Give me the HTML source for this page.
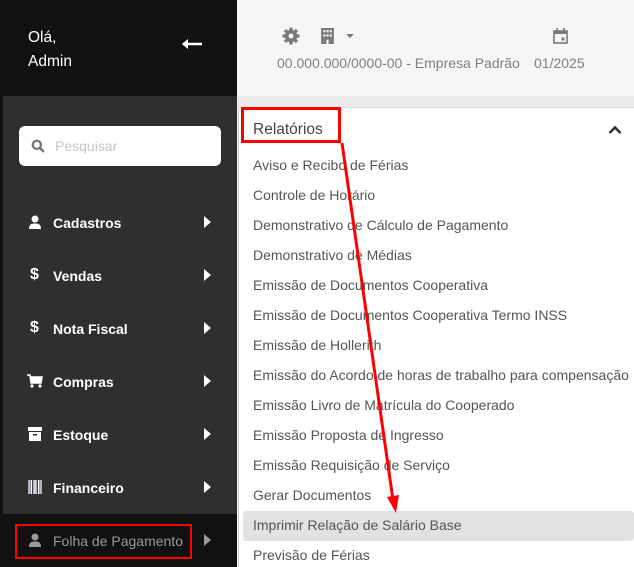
<!DOCTYPE html>
<html><head><meta charset="utf-8">
<style>
*{margin:0;padding:0;box-sizing:border-box}
body{width:634px;height:567px;overflow:hidden;font-family:"Liberation Sans",Roboto,sans-serif;background:#f5f5f5;position:relative}
.hdr{position:absolute;left:0;top:0;width:237px;height:96px;background:#111}
.hello{position:absolute;left:28px;top:26px;color:#fff;font-size:15.5px;line-height:24px}
.back{position:absolute;left:181px;top:38px}
.side{position:absolute;left:3px;top:96px;width:234px;height:418px;background:#2f2f2f}
.bot{position:absolute;left:0;top:514px;width:237px;height:53px;background:#111}
.strip{position:absolute;left:0;top:96px;width:3px;height:418px;background:#111}
.search{position:absolute;left:19px;top:126px;width:202px;height:40px;background:#fff;border-radius:6px}
.search span{position:absolute;left:36px;top:12px;color:#c4c4c4;font-size:14px}
.mi{position:absolute;left:28px;color:#fff;font-weight:bold;font-size:14px;height:20px;width:190px}
.mi .ic{position:absolute;left:0;top:2px;width:14px;height:14px}
.mi .t{position:absolute;left:25px;top:2px}
.mi .ar{position:absolute;left:176px;top:3px;width:0;height:0;border-left:7px solid #fff;border-top:6px solid transparent;border-bottom:6px solid transparent}
.top{position:absolute;left:237px;top:0;width:397px;height:96px;background:#f6f6f6}
.band{position:absolute;left:237px;top:96px;width:397px;height:11px;background:#ececec}
.toptxt{position:absolute;top:55px;color:#808080;font-size:14px}
.panel{position:absolute;left:238px;top:107px;width:396px;height:460px;background:#fff;border-left:1px solid #ccc;border-top:1px solid #ddd;border-radius:4px 0 0 0}
.rel{position:absolute;left:253px;top:121px;color:#444;font-size:15.5px}
.it{position:absolute;left:253px;color:#555;font-size:14px;white-space:nowrap}
.hl{position:absolute;left:243px;top:511px;width:391px;height:30px;background:#e2e2e2;border-radius:3px}
.rb{position:absolute;border:3px solid #f00}
.dl{position:absolute;left:2px;top:0;font-size:16px;font-weight:bold}
</style></head><body>
<div class="hdr"></div>
<div class="hello">Olá,<br>Admin</div>
<svg class="back" width="22" height="12" viewBox="0 0 22 12"><path d="M2 6H21" stroke="#fff" stroke-width="2.5"/><path d="M1 6L7 1V11Z" fill="#fff"/></svg>
<div class="strip"></div>
<div class="side"></div>
<div class="bot"></div>
<div class="search"><svg style="position:absolute;left:12px;top:13px" width="14" height="14" viewBox="0 0 12 12"><circle cx="5" cy="5" r="3.5" stroke="#777" stroke-width="2" fill="none"/><path d="M7.5 7.5L11 11" stroke="#777" stroke-width="2.2"/></svg><span>Pesquisar</span></div>

<div class="mi" style="top:213px"><svg class="ic" viewBox="0 0 14 14"><circle cx="7" cy="4" r="3.5" fill="#fff"/><path d="M1 14C1 9 4 8.5 7 8.5S13 9 13 14Z" fill="#fff"/></svg><span class="t">Cadastros</span><i class="ar"></i></div>
<div class="mi" style="top:266px"><span class="dl">$</span><span class="t">Vendas</span><i class="ar"></i></div>
<div class="mi" style="top:319px"><span class="dl">$</span><span class="t">Nota Fiscal</span><i class="ar"></i></div>
<div class="mi" style="top:372px"><svg class="ic" style="width:16px;left:-1px" viewBox="0 0 16 14"><path d="M0 1H3L4 9H14L15 3H4" fill="#fff" stroke="#fff" stroke-width="1.5"/><circle cx="5" cy="12" r="1.6" fill="#fff"/><circle cx="13" cy="12" r="1.6" fill="#fff"/></svg><span class="t">Compras</span><i class="ar"></i></div>
<div class="mi" style="top:425px"><svg class="ic" viewBox="0 0 14 14"><rect x="0" y="0" width="14" height="4" fill="#fff"/><rect x="1" y="5" width="12" height="9" fill="#fff"/><rect x="5" y="7" width="4" height="1.5" fill="#2f2f2f"/></svg><span class="t">Estoque</span><i class="ar"></i></div>
<div class="mi" style="top:478px"><svg class="ic" viewBox="0 0 14 14"><path d="M1 0V14M3.5 0V14M6 0V14M8 0V14M10.5 0V14M13 0V14" stroke="#fff" stroke-width="1.2"/><path d="M2.2 0V14M7 0V14M11.7 0V14" stroke="#c8a0ff" stroke-width="0.8"/></svg><span class="t">Financeiro</span><i class="ar"></i></div>
<div class="mi" style="top:531px;color:#999;font-weight:normal"><svg class="ic" viewBox="0 0 14 14"><circle cx="7" cy="4" r="3.5" fill="#999"/><path d="M1 14C1 9 4 8.5 7 8.5S13 9 13 14Z" fill="#999"/></svg><span class="t" style="font-size:14px">Folha de Pagamento</span><i class="ar" style="border-left-color:#999"></i></div>
<div class="rb" style="left:15px;top:524px;width:177px;height:35px;border-width:2.5px"></div>

<div class="top"></div>
<div class="band"></div>
<svg style="position:absolute;left:282px;top:27px" width="18" height="18" viewBox="0 0 16 16"><circle cx="8" cy="8" r="5.5" fill="#7a7a7a"/><path d="M8 0.5V15.5M0.5 8H15.5M2.7 2.7L13.3 13.3M13.3 2.7L2.7 13.3" stroke="#7a7a7a" stroke-width="3"/><circle cx="8" cy="8" r="2.2" fill="#f6f6f6"/></svg>
<svg style="position:absolute;left:321px;top:28px" width="13" height="16" viewBox="0 0 12 15"><rect x="0" y="0" width="12" height="15" fill="#7a7a7a"/><g fill="#f6f6f6"><rect x="2" y="2" width="2" height="2"/><rect x="5" y="2" width="2" height="2"/><rect x="8" y="2" width="2" height="2"/><rect x="2" y="6" width="2" height="2"/><rect x="5" y="6" width="2" height="2"/><rect x="8" y="6" width="2" height="2"/><rect x="5" y="11" width="2" height="4"/></g></svg>
<div style="position:absolute;left:346px;top:34px;border-top:4px solid #7a7a7a;border-left:4px solid transparent;border-right:4px solid transparent"></div>
<svg style="position:absolute;left:553px;top:28px" width="15" height="16" viewBox="0 0 15 16"><rect x="1" y="3" width="13" height="12" fill="none" stroke="#7a7a7a" stroke-width="1.6"/><rect x="1" y="3" width="13" height="3" fill="#7a7a7a"/><path d="M4 0V4M11 0V4" stroke="#7a7a7a" stroke-width="1.6"/><rect x="8.5" y="9.5" width="3" height="3" fill="#7a7a7a"/></svg>
<div class="toptxt" style="left:277px">00.000.000/0000-00 - Empresa Padrão</div>
<div class="toptxt" style="left:534px">01/2025</div>

<div class="panel"></div>
<div class="rel">Relatórios</div>
<svg style="position:absolute;left:608px;top:125px" width="14" height="9" viewBox="0 0 14 9"><path d="M1.5 8L7 2.5L12.5 8" stroke="#333" stroke-width="2.6" fill="none"/></svg>
<div class="hl"></div>
<div class="it" style="top:157px">Aviso e Recibo de Férias</div>
<div class="it" style="top:187px">Controle de Horário</div>
<div class="it" style="top:217px">Demonstrativo de Cálculo de Pagamento</div>
<div class="it" style="top:247px">Demonstrativo de Médias</div>
<div class="it" style="top:277px">Emissão de Documentos Cooperativa</div>
<div class="it" style="top:307px">Emissão de Documentos Cooperativa Termo INSS</div>
<div class="it" style="top:337px">Emissão de Hollerith</div>
<div class="it" style="top:367px">Emissão do Acordo de horas de trabalho para compensação</div>
<div class="it" style="top:397px">Emissão Livro de Matrícula do Cooperado</div>
<div class="it" style="top:427px">Emissão Proposta de Ingresso</div>
<div class="it" style="top:457px">Emissão Requisição de Serviço</div>
<div class="it" style="top:487px">Gerar Documentos</div>
<div class="it" style="top:517px">Imprimir Relação de Salário Base</div>
<div class="it" style="top:547px">Previsão de Férias</div>
<div class="rb" style="left:241px;top:107px;width:100px;height:36px"></div>
<svg style="position:absolute;left:0;top:0" width="634" height="567"><path d="M342 143L393 500" stroke="#f00" stroke-width="3"/><path d="M387 497L396 513L399 495Z" fill="#f00"/></svg>
</body></html>
